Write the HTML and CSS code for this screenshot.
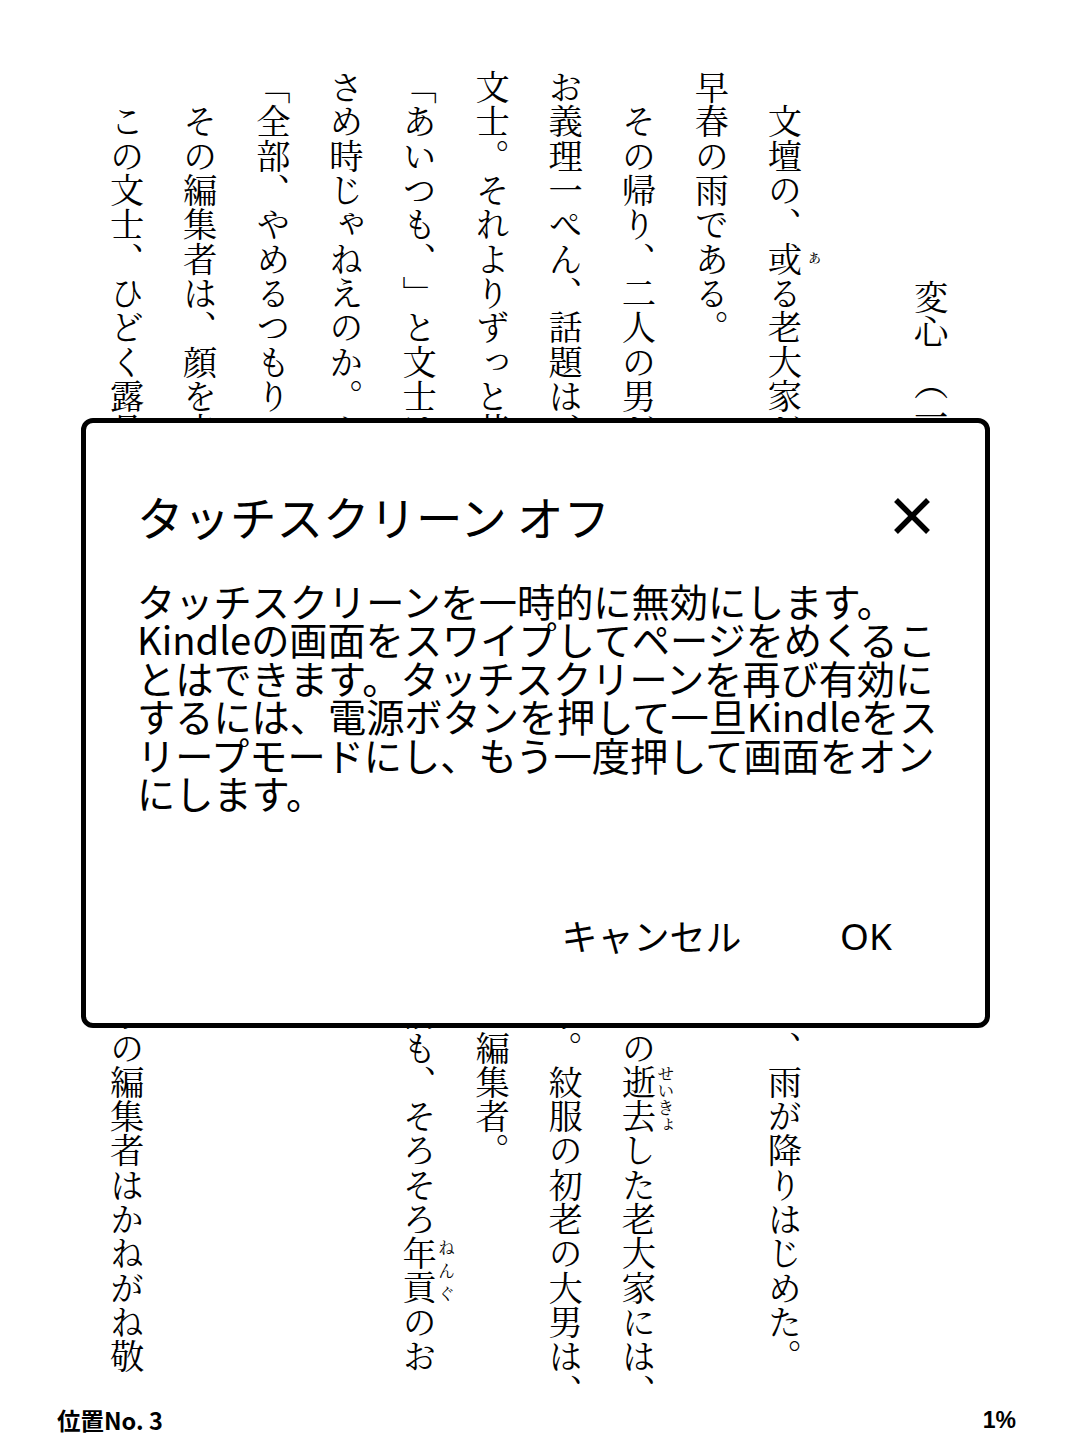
FILE: index.html
```html
<!DOCTYPE html>
<html lang="ja">
<head>
<meta charset="utf-8">
<title>グッド・バイ</title>
<link rel="stylesheet" href="styles.css">
</head>
<body>
<div class="screen">
  <main class="book">
    <div class="col title">変心　<span class="trim">（</span>一）</div>
    <div class="col">　文壇の、<ruby>或<rt>ぁ</rt></ruby>る老大家が亡くなって、その告別式の終り頃から、雨が降りはじめた。</div>
    <div class="col">早春の雨である。</div>
    <div class="col">　その帰り、二人の男が相合い傘で歩いている。いずれも、その<ruby>逝去<rt>せいきょ</rt></ruby>した老大家には、</div>
    <div class="col">お義理一ぺん、話題は、女に就いての、極めて不きんしんな事。紋服の初老の大男は、</div>
    <div class="col">文士。それよりずっと若いロイド眼鏡、縞ズボンの好男子は、編集者。</div>
    <div class="col">「あいつも、」と文士は言う。「女好きだったらしいな。お前も、そろそろ<ruby>年貢<rt>ねんぐ</rt></ruby>のお</div>
    <div class="col">さめ時じゃねえのか。やつれたぜ。」</div>
    <div class="col">「全部、やめるつもりでいるんです。」</div>
    <div class="col">　その編集者は、顔を赤くして答える。</div>
    <div class="col">　この文士、ひどく露骨で、下品な口をきくので、その好男子の編集者はかねがね敬</div>
  </main>
  <footer class="status">
    <span class="loc">位置No. 3</span>
    <span class="pct">1%</span>
  </footer>
  <div class="dialog" role="dialog">
    <div class="dialog-head">
      <h1 class="dialog-title">タッチスクリーン オフ</h1>
      <svg class="close" viewBox="0 0 38 38" aria-label="閉じる">
        <path d="M3 3 L35 35 M35 3 L3 35" stroke="#000" stroke-width="5.5" fill="none" stroke-linecap="butt"/>
      </svg>
    </div>
    <p class="dialog-body">タッチスクリーンを一時的に無効にします。Kindleの画面をスワイプしてページをめくることはできます。タッチスクリーンを再び有効にするには、電源ボタンを押して一旦Kindleをスリープモードにし、もう一度押して画面をオンにします。</p>
    <div class="actions">
      <span class="btn btn-cancel">キャンセル</span>
      <span class="btn btn-ok">OK</span>
    </div>
  </div>
</div>
</body>
</html>
```

FILE: styles.css
```css
html, body {
  margin: 0;
  padding: 0;
  background: #fff;
}

.screen {
  position: relative;
  width: 1072px;
  height: 1448px;
  overflow: hidden;
  background: #fff;
  color: #000;
}

.book {
  writing-mode: vertical-rl;
  margin: 70px 0 0 90.5px;
  width: 877.2px;
  height: 1335px;
  font-family: "Noto Serif CJK JP", "Noto Sans CJK JP", serif;
  font-size: 34.3px;
  line-height: 73.1px;
  text-spacing-trim: space-all;
}

.col {
  white-space: nowrap;
}

.title {
  text-indent: 6.12em;
  margin-block-end: 73.1px;
}

.trim {
  margin-inline-start: -0.5em;
}

.book rt {
  font-size: 0.5em;
  line-height: 1;
}

.status {
  display: flex;
  justify-content: space-between;
  align-items: center;
  height: 30px;
  padding: 0 56px 0 57px;
  font-weight: 700;
  font-size: 23px;
  line-height: 30px;
}

.loc {
  font-family: "Noto Sans CJK JP", sans-serif;
  font-size: 23.5px;
}

.pct {
  font-family: "Liberation Sans", sans-serif;
}

.dialog {
  position: absolute;
  top: 418px;
  left: 81px;
  width: 909px;
  height: 610px;
  box-sizing: border-box;
  border: 5px solid #000;
  border-radius: 12px;
  background: #fff;
  display: flex;
  flex-direction: column;
  padding: 65.5px 40px 66px 51px;
  font-family: "Noto Sans CJK JP", sans-serif;
  color: #000;
}

.dialog-head {
  display: flex;
  justify-content: space-between;
  align-items: center;
  padding-right: 14px;
}

.dialog-title {
  margin: 0;
  font-size: 46.5px;
  line-height: 54px;
  font-weight: 400;
}

.close {
  width: 38px;
  height: 38px;
  display: block;
}

.dialog-body {
  margin: 39px 0 0;
  font-size: 38.2px;
  line-height: 38.6px;
}

.actions {
  margin-top: auto;
  display: flex;
  justify-content: flex-end;
  align-items: center;
  padding-right: 14px;
  font-size: 36px;
  line-height: 43px;
}

.btn-ok {
  width: 130px;
  margin-left: 59.5px;
  text-align: center;
  font-family: "Noto Sans", sans-serif;
  font-size: 37px;
}
```
